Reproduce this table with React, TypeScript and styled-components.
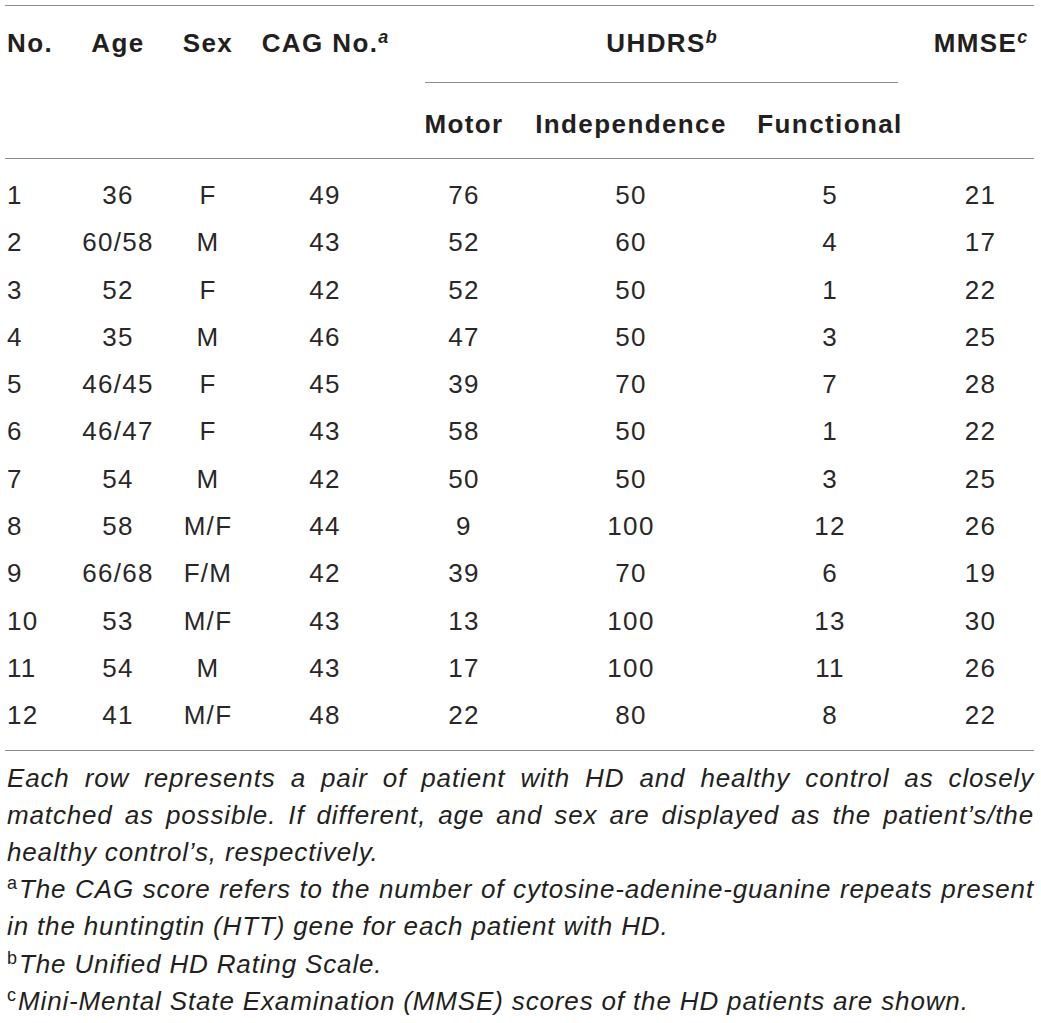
import React from "react";
import styled, { createGlobalStyle } from "styled-components";

const LINE = "#8c8c8c";
const INK = "#231f20";

const GlobalStyle = createGlobalStyle`
  html, body { margin: 0; padding: 0; background: #ffffff; }
  body {
    font-family: "Liberation Sans", Arial, Helvetica, sans-serif;
    color: ${INK};
  }
`;

const Page = styled.div`
  width: 1041px;
  box-sizing: border-box;
  padding: 5px 7px 0 5px;
`;

const Table = styled.table`
  width: 100%;
  table-layout: fixed;
  border-collapse: separate;
  border-spacing: 0;
  border-top: 1px solid ${LINE};

  tbody tr:first-child td {
    padding-top: 13px;
  }
  tbody tr:last-child td {
    padding-bottom: 10px;
    border-bottom: 1px solid ${LINE};
  }
`;

const Col = styled.col<{ $w: number }>`
  width: ${(p) => p.$w}px;
`;

const HeadCell = styled.th<{ $align?: "left" | "center"; $indent?: number }>`
  font-weight: 700;
  font-size: 26px;
  letter-spacing: 1.4px;
  line-height: 30px;
  white-space: nowrap;
  text-align: ${(p) => p.$align ?? "center"};
  vertical-align: top;
  padding: 22px 0 0 ${(p) => p.$indent ?? 0}px;
  border-bottom: 1px solid ${LINE};
  color: ${INK};
`;

const GroupCell = styled.th`
  padding: 0;
  vertical-align: top;
  font-weight: 700;
  font-size: 26px;
  letter-spacing: 1.4px;
  line-height: 30px;
  color: ${INK};
`;

const GroupLabel = styled.div`
  padding: 22px 0 24px;
  margin: 0 29px 0 26px;
  text-align: center;
  border-bottom: 1px solid ${LINE};
`;

const SubCell = styled.th`
  font-weight: 700;
  font-size: 26px;
  letter-spacing: 1.4px;
  line-height: 30px;
  white-space: nowrap;
  text-align: center;
  padding: 26px 0 19px;
  border-bottom: 1px solid ${LINE};
  color: ${INK};
`;

const HeadSup = styled.sup`
  font-size: 18px;
  font-style: italic;
  font-weight: 700;
  letter-spacing: 0;
  line-height: 0;
  vertical-align: 9px;
`;

const Cell = styled.td<{ $align?: "left" | "center"; $indent?: number }>`
  font-size: 26px;
  letter-spacing: 1.3px;
  line-height: 47.3px;
  padding: 0 0 0 ${(p) => p.$indent ?? 0}px;
  text-align: ${(p) => p.$align ?? "center"};
  white-space: nowrap;
  color: #2a2728;
`;

const Notes = styled.div`
  margin-top: 9px;
  font-style: italic;
  font-size: 26px;
  letter-spacing: 0.85px;
  line-height: 37.2px;
  color: ${INK};
  padding-left: 2px;
`;

const NoteLine = styled.span<{ $justify?: boolean }>`
  display: block;
  text-align: ${(p) => (p.$justify ? "justify" : "left")};
  text-align-last: ${(p) => (p.$justify ? "justify" : "left")};
`;

const NoteMark = styled.sup`
  font-style: normal;
  font-size: 18px;
  letter-spacing: 0;
  line-height: 0;
  vertical-align: 9px;
  margin-right: 2px;
`;

const widths = [66, 94, 86, 148, 130, 204, 194, 107];

const rows: string[][] = [
  ["1", "36", "F", "49", "76", "50", "5", "21"],
  ["2", "60/58", "M", "43", "52", "60", "4", "17"],
  ["3", "52", "F", "42", "52", "50", "1", "22"],
  ["4", "35", "M", "46", "47", "50", "3", "25"],
  ["5", "46/45", "F", "45", "39", "70", "7", "28"],
  ["6", "46/47", "F", "43", "58", "50", "1", "22"],
  ["7", "54", "M", "42", "50", "50", "3", "25"],
  ["8", "58", "M/F", "44", "9", "100", "12", "26"],
  ["9", "66/68", "F/M", "42", "39", "70", "6", "19"],
  ["10", "53", "M/F", "43", "13", "100", "13", "30"],
  ["11", "54", "M", "43", "17", "100", "11", "26"],
  ["12", "41", "M/F", "48", "22", "80", "8", "22"],
];

export default function App() {
  return (
    <>
      <GlobalStyle />
      <Page>
        <Table>
          <colgroup>
            {widths.map((w, i) => (
              <Col key={i} $w={w} />
            ))}
          </colgroup>
          <thead>
            <tr>
              <HeadCell rowSpan={2} $align="left" $indent={2}>
                No.
              </HeadCell>
              <HeadCell rowSpan={2}>Age</HeadCell>
              <HeadCell rowSpan={2}>Sex</HeadCell>
              <HeadCell rowSpan={2}>
                CAG No.<HeadSup>a</HeadSup>
              </HeadCell>
              <GroupCell colSpan={3}>
                <GroupLabel>
                  UHDRS<HeadSup>b</HeadSup>
                </GroupLabel>
              </GroupCell>
              <HeadCell rowSpan={2}>
                MMSE<HeadSup>c</HeadSup>
              </HeadCell>
            </tr>
            <tr>
              <SubCell>Motor</SubCell>
              <SubCell>Independence</SubCell>
              <SubCell>Functional</SubCell>
            </tr>
          </thead>
          <tbody>
            {rows.map((r) => (
              <tr key={r[0]}>
                {r.map((v, i) => (
                  <Cell key={i} $align={i === 0 ? "left" : "center"} $indent={i === 0 ? 2 : 0}>
                    {v}
                  </Cell>
                ))}
              </tr>
            ))}
          </tbody>
        </Table>
        <Notes>
          <NoteLine $justify>
            Each row represents a pair of patient with HD and healthy control as closely
          </NoteLine>
          <NoteLine $justify>
            matched as possible. If different, age and sex are displayed as the patient’s/the
          </NoteLine>
          <NoteLine>healthy control’s, respectively.</NoteLine>
          <NoteLine $justify>
            <NoteMark>a</NoteMark>The CAG score refers to the number of cytosine-adenine-guanine repeats present
          </NoteLine>
          <NoteLine>in the huntingtin (HTT) gene for each patient with HD.</NoteLine>
          <NoteLine>
            <NoteMark>b</NoteMark>The Unified HD Rating Scale.
          </NoteLine>
          <NoteLine>
            <NoteMark>c</NoteMark>Mini-Mental State Examination (MMSE) scores of the HD patients are shown.
          </NoteLine>
        </Notes>
      </Page>
    </>
  );
}
